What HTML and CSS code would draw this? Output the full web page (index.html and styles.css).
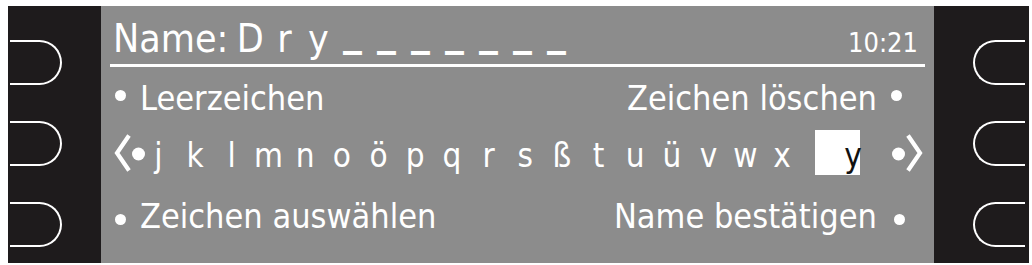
FILE: index.html
```html
<!DOCTYPE html>
<html lang="de">
<head>
<meta charset="utf-8">
<title>Name eingeben</title>
<link rel="stylesheet" href="styles.css">
</head>
<body>
<div class="device">
  <div class="bezel bezel-left">
    <div class="btn btn-left"></div>
    <div class="btn btn-left"></div>
    <div class="btn btn-left"></div>
  </div>
  <div class="screen">
    <div class="header">
      <div class="title">
        <span class="label">Name:</span>
        <span class="cells">
          <span class="cell">D</span><span class="cell">r</span><span class="cell">y</span><span class="cell us">_</span><span class="cell us">_</span><span class="cell us">_</span><span class="cell us">_</span><span class="cell us">_</span><span class="cell us">_</span><span class="cell us">_</span>
        </span>
      </div>
      <div class="clock">10:21</div>
    </div>
    <div class="divider"></div>
    <div class="row row-top">
      <div class="opt"><span class="dot"></span><span class="txt">Leerzeichen</span></div>
      <div class="opt"><span class="txt">Zeichen löschen</span><span class="dot"></span></div>
    </div>
    <div class="charrow">
      <svg class="arrow" width="32" height="40" viewBox="0 0 32 40">
        <polyline points="15,2.5 3,20 15,37.5" fill="none" stroke="#fff" stroke-width="4.2" stroke-linejoin="miter"/>
        <circle cx="24.5" cy="21" r="6.5" fill="#fff"/>
      </svg>
      <div class="letters">
        <span>j</span><span>k</span><span>l</span><span>m</span><span>n</span><span>o</span><span>ö</span><span>p</span><span>q</span><span>r</span><span>s</span><span>ß</span><span>t</span><span>u</span><span>ü</span><span>v</span><span>w</span><span>x</span>
      </div>
      <div class="cursor"><span>y</span></div>
      <svg class="arrow arrow-right" width="32" height="40" viewBox="0 0 32 40">
        <polyline points="15,2.5 3,20 15,37.5" fill="none" stroke="#fff" stroke-width="4.2" stroke-linejoin="miter"/>
        <circle cx="24.5" cy="21" r="6.5" fill="#fff"/>
      </svg>
    </div>
    <div class="row row-bottom">
      <div class="opt"><span class="dot dot-low"></span><span class="txt">Zeichen auswählen</span></div>
      <div class="opt"><span class="txt">Name bestätigen</span><span class="dot dot-low"></span></div>
    </div>
  </div>
  <div class="bezel bezel-right">
    <div class="btn btn-right"></div>
    <div class="btn btn-right"></div>
    <div class="btn btn-right"></div>
  </div>
</div>
</body>
</html>
```

FILE: styles.css
```css
html, body {
  margin: 0;
  padding: 0;
  background: #ffffff;
}

body {
  font-family: "DejaVu Sans Condensed", "DejaVu Sans", sans-serif;
  color: #ffffff;
}

.device {
  margin: 6px 0 0 8px;
  width: 1021px;
  height: 257px;
  display: flex;
}

.bezel {
  background: #1e1b1c;
  display: flex;
  flex-direction: column;
  gap: 36px;
  box-sizing: border-box;
  padding-top: 34px;
}

.bezel-left {
  width: 93px;
  padding-left: 2px;
}

.bezel-right {
  width: 95px;
  padding-left: 39px;
}

.btn {
  width: 52px;
  height: 45px;
  box-sizing: border-box;
  border: 2.5px solid #ffffff;
}

.btn-left {
  border-left: none;
  border-radius: 0 22.5px 22.5px 0;
}

.btn-right {
  border-right: none;
  border-radius: 22.5px 0 0 22.5px;
}

.screen {
  width: 833px;
  background: #8c8c8c;
  display: flex;
  flex-direction: column;
}

.header {
  margin-top: 11px;
  height: 43px;
  padding: 0 16px 0 12px;
  display: flex;
  justify-content: space-between;
  align-items: baseline;
}

.title {
  display: flex;
  align-items: baseline;
  font-size: 39px;
  line-height: 43px;
}

.cells {
  display: flex;
  align-items: flex-start;
  margin-left: 5px;
}

.cell {
  width: 34px;
  text-align: center;
}

.us {
  margin-top: -8px;
  font-weight: bold;
  font-size: 42px;
}

.clock {
  font-size: 27px;
  line-height: 43px;
}

.divider {
  margin: 4px 9px 0;
  height: 2.5px;
  background: #ffffff;
}

.row {
  height: 38px;
  font-size: 34px;
  line-height: 38px;
  display: flex;
  justify-content: space-between;
  align-items: center;
}

.row-top {
  margin-top: 12px;
  padding: 0 32px 0 14px;
}

.row-bottom {
  margin-top: 22px;
  padding: 0 29px 0 14px;
}

.opt {
  display: flex;
  align-items: center;
  gap: 14px;
}

.row-bottom .opt:last-child {
  gap: 17px;
}

.dot {
  width: 11px;
  height: 11px;
  border-radius: 50%;
  background: #ffffff;
  margin-bottom: 4px;
}

.dot-low {
  margin-bottom: 0;
  margin-top: 7px;
}

.charrow {
  margin-top: 13.5px;
  height: 45px;
  padding-left: 13px;
  display: flex;
  align-items: flex-start;
}

.arrow {
  margin-top: 3px;
  flex: none;
}

.arrow-right {
  margin-left: 31px;
  transform: scaleX(-1);
}

.letters {
  margin-left: -6px;
  display: grid;
  grid-template-columns: repeat(18, 36.7px);
  font-size: 33px;
  line-height: 51px;
  height: 45px;
  text-align: center;
}

.cursor {
  margin-left: 14.4px;
  width: 45px;
  height: 45px;
  background: #ffffff;
  color: #111111;
  display: flex;
  justify-content: flex-end;
  align-items: flex-start;
  font-size: 33px;
  line-height: 51px;
}

.cursor span {
  margin-right: -2px;
}
```
